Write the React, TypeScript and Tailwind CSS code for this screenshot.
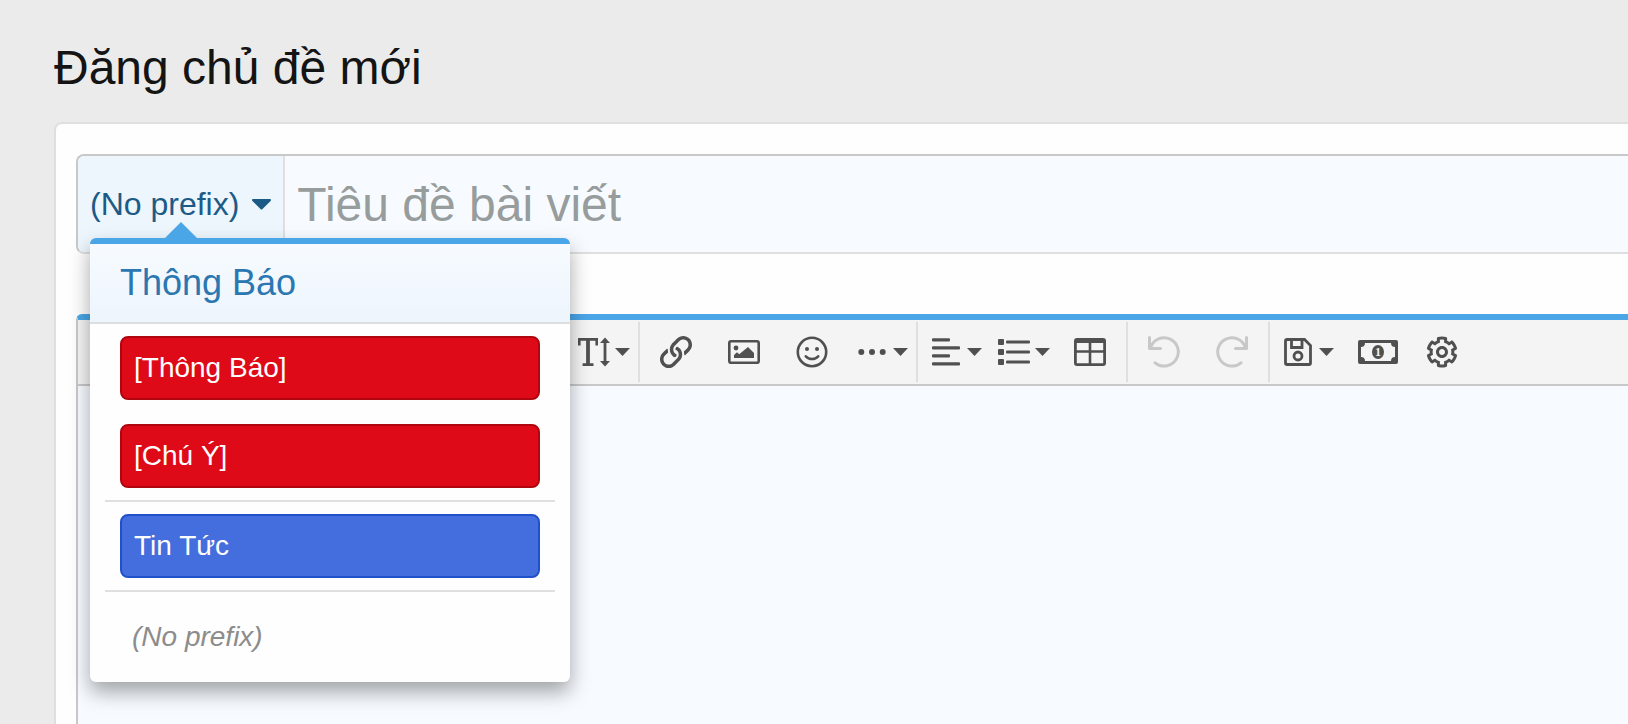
import React, { useState } from 'react';

interface IconProps {
  children: React.ReactNode;
  width?: number;
}

const Icon: React.FC<IconProps> = ({ children, width = 32 }) => (
  <svg width={width} height={32} viewBox={`0 0 ${width} 32`} fill="currentColor" className="shrink-0" aria-hidden="true">
    {children}
  </svg>
);

const Caret = () => (
  <svg width="15" height="8" viewBox="0 0 15 8" fill="currentColor" className="shrink-0" aria-hidden="true">
    <path d="M0 0h15L7.5 8z" />
  </svg>
);

const FontSizeIcon = () => (
  <Icon>
    <path d="M0 2h20v7.500h-2.600V4.800h-5.500v22.400H15.500V30H4.600v-2.800h3.500V4.800H2.600v4.700H0z" />
    <path d="M27 1.500l5 5.500h-3.600v18H32l-5 5.500-5-5.500h3.600V7H22z" />
  </Icon>
);

const LinkIcon = () => (
  <Icon>
    <path
      transform="scale(.0625)"
      d="M314.222 197.78c51.091 51.091 54.377 132.287 9.75 187.16-6.242 7.73-2.784 3.865-84.94 86.02-54.696 54.696-143.266 54.745-197.99 0-54.711-54.69-54.734-143.255 0-197.99 32.773-32.773 51.835-51.899 63.409-63.457 7.463-7.452 20.331-2.354 20.486 8.192a173.31 173.31 0 0 0 4.746 37.828c.966 4.029-.272 8.269-3.202 11.198L80.632 312.57c-32.755 32.775-32.887 85.892 0 118.8 32.775 32.755 85.892 32.887 118.8 0l75.19-75.2c32.718-32.725 32.777-86.013 0-118.79a83.722 83.722 0 0 0-22.814-16.229c-4.623-2.233-7.182-7.25-6.561-12.346 1.356-11.122 6.296-21.885 14.815-30.405l4.375-4.375c3.625-3.626 9.177-4.594 13.76-2.294 12.999 6.524 25.187 15.211 36.025 26.049zM470.958 41.04c-54.724-54.745-143.294-54.696-197.99 0-82.156 82.156-78.698 78.29-84.94 86.02-44.627 54.873-41.341 136.069 9.75 187.16 10.838 10.838 23.026 19.525 36.025 26.049 4.582 2.3 10.134 1.331 13.76-2.294l4.375-4.375c8.52-8.519 13.459-19.283 14.815-30.405.621-5.096-1.938-10.113-6.561-12.346a83.706 83.706 0 0 1-22.814-16.229c-32.777-32.777-32.718-86.065 0-118.79l75.19-75.2c32.908-32.887 86.025-32.755 118.8 0 32.887 32.908 32.755 86.025 0 118.8l-45.848 45.84c-2.93 2.929-4.168 7.169-3.202 11.198a173.31 173.31 0 0 1 4.746 37.828c.155 10.546 13.023 15.644 20.486 8.192 11.574-11.558 30.636-30.684 63.409-63.457 54.733-54.735 54.71-143.3-.001-197.991z"
    />
  </Icon>
);

const ImageIcon = () => (
  <Icon>
    <rect x="1.300" y="5.300" width="29.400" height="21.400" rx="1.800" fill="none" stroke="currentColor" strokeWidth="2.600" />
    <circle cx="8" cy="12" r="2.400" />
    <path d="M6 22v-3l3-2.800 2.200 2L20 11l6 6v5z" />
  </Icon>
);

const SmileIcon = () => (
  <Icon>
    <g fill="none" stroke="currentColor" strokeWidth="2.600" strokeLinecap="round">
      <circle cx="16" cy="16" r="14.200" />
      <path d="M9.800 20.300c3.200 3.600 9.200 3.600 12.400 0" />
    </g>
    <circle cx="11" cy="13" r="2" />
    <circle cx="21" cy="13" r="2" />
  </Icon>
);

const EllipsisIcon = () => (
  <Icon>
    <circle cx="5.300" cy="16" r="3" />
    <circle cx="16" cy="16" r="3" />
    <circle cx="26.700" cy="16" r="3" />
  </Icon>
);

const AlignIcon = () => (
  <Icon>
    <rect x="2" y="2.300" width="18" height="3.200" rx="1" />
    <rect x="2" y="10.300" width="28" height="3.200" rx="1" />
    <rect x="2" y="18.300" width="18" height="3.200" rx="1" />
    <rect x="2" y="26.300" width="28" height="3.200" rx="1" />
  </Icon>
);

const ListIcon = () => (
  <Icon>
    {[3, 13, 23].map((y) => (
      <g key={y}>
        <rect x="0" y={y} width="6" height="6" rx="1" />
        <rect x="8" y={y + 1.4} width="24" height="3.200" rx="1" />
      </g>
    ))}
  </Icon>
);

const TableIcon = () => (
  <Icon>
    <path fillRule="evenodd" d="M3 2h26a3 3 0 0 1 3 3v22a3 3 0 0 1-3 3H3a3 3 0 0 1-3-3V5a3 3 0 0 1 3-3zM2.800 7v7.200h11.900V7zM17.300 7v7.200h11.900V7zM2.800 16.800v10.400h11.900V16.800zM17.300 16.800v10.400h11.900V16.800z" />
  </Icon>
);

const UndoIcon = () => (
  <Icon>
    <g fill="none" stroke="currentColor" strokeWidth="3" strokeLinecap="round" strokeLinejoin="round">
      <path d="M1.500 1.500v11h11" />
      <path d="M2.600 11.500A14.200 14.200 0 1 1 7 26.800" />
    </g>
  </Icon>
);

const RedoIcon = () => (
  <Icon>
    <g fill="none" stroke="currentColor" strokeWidth="3" strokeLinecap="round" strokeLinejoin="round">
      <path d="M30.500 1.500v11h-11" />
      <path d="M29.400 11.500A14.200 14.200 0 1 0 25 26.800" />
    </g>
  </Icon>
);

const SaveIcon = () => (
  <Icon>
    <g fill="none" stroke="currentColor" strokeWidth="2.800">
      <path d="M5 3.500h17.500l6 6V27a1.500 1.500 0 0 1-1.500 1.500H5A1.500 1.500 0 0 1 3.500 27V5A1.500 1.500 0 0 1 5 3.500z" />
      <path d="M9.500 3.500v8h10.500v-8" />
      <circle cx="16" cy="20" r="4" />
    </g>
  </Icon>
);

const MoneyIcon = () => (
  <Icon width={40}>
    <path fillRule="evenodd" d="M2 4h36a2 2 0 0 1 2 2v20a2 2 0 0 1-2 2H2a2 2 0 0 1-2-2V6a2 2 0 0 1 2-2zM7 7a4 4 0 0 1-4 4v10a4 4 0 0 1 4 4h26a4 4 0 0 1 4-4V11a4 4 0 0 1-4-4z" />
    <ellipse cx="20" cy="16" rx="6" ry="7" />
    <text x="20" y="20" textAnchor="middle" fill="#f4f4f4" className="font-['Liberation_Serif',serif] text-[12px] font-bold">
      1
    </text>
  </Icon>
);

const GearIcon = () => (
  <Icon>
    <path
      transform="scale(.0625)"
      d="M452.515 237l31.843-18.382c9.426-5.441 13.996-16.542 11.177-27.054-11.404-42.531-33.842-80.547-64.058-110.797-7.68-7.688-19.575-9.246-28.985-3.811l-31.785 18.358a196.276 196.276 0 0 0-32.899-19.02V39.541a24.016 24.016 0 0 0-17.842-23.206c-41.761-11.107-86.117-11.121-127.93-.001-10.519 2.798-17.844 12.321-17.844 23.206v36.753a196.276 196.276 0 0 0-32.899 19.02l-31.785-18.358c-9.41-5.435-21.305-3.877-28.985 3.811-30.216 30.25-52.654 68.265-64.058 110.797-2.819 10.512 1.751 21.613 11.177 27.054L59.485 237a197.715 197.715 0 0 0 0 37.999l-31.843 18.382c-9.426 5.441-13.996 16.542-11.177 27.054 11.404 42.531 33.842 80.547 64.058 110.797 7.68 7.688 19.575 9.246 28.985 3.811l31.785-18.358a202.334 202.334 0 0 0 32.899 19.02v36.753a24.016 24.016 0 0 0 17.842 23.206c41.761 11.107 86.117 11.122 127.93.001 10.519-2.798 17.844-12.321 17.844-23.206v-36.753a196.276 196.276 0 0 0 32.899-19.02l31.785 18.358c9.41 5.435 21.305 3.877 28.985-3.811 30.216-30.25 52.654-68.266 64.058-110.797 2.819-10.512-1.751-21.613-11.177-27.054L452.515 275c1.22-12.65 1.22-25.35 0-38zm-52.679 63.019l43.819 25.289a200.138 200.138 0 0 1-33.849 58.528l-43.829-25.309c-31.984 27.397-36.659 30.077-76.168 44.029v50.599a200.917 200.917 0 0 1-67.618 0v-50.599c-39.504-13.95-44.196-16.642-76.168-44.029l-43.829 25.309a200.15 200.15 0 0 1-33.849-58.528l43.819-25.289c-7.63-41.299-7.634-46.719 0-88.038l-43.819-25.289c7.85-21.229 19.31-41.049 33.849-58.529l43.829 25.309c31.984-27.397 36.66-30.078 76.168-44.029V58.845a200.917 200.917 0 0 1 67.618 0v50.599c39.504 13.95 44.196 16.642 76.168 44.029l43.829-25.309a200.143 200.143 0 0 1 33.849 58.529l-43.819 25.289c7.631 41.3 7.634 46.718 0 88.037zM256 160c-52.935 0-96 43.065-96 96s43.065 96 96 96 96-43.065 96-96-43.065-96-96-96zm0 144c-26.468 0-48-21.532-48-48 0-26.467 21.532-48 48-48s48 21.533 48 48c0 26.468-21.532 48-48 48z"
    />
  </Icon>
);

interface ToolButtonProps {
  icon: React.ReactNode;
  label: string;
  menu?: boolean;
  disabled?: boolean;
  size?: string;
}

const ToolButton: React.FC<ToolButtonProps> = ({ icon, label, menu, disabled, size = 'w-[68px]' }) => (
  <button
    type="button"
    aria-label={label}
    disabled={disabled}
    className={`flex h-16 shrink-0 items-center ${size} ${menu ? 'gap-[5px] pl-[10px]' : 'justify-center'} ${
      disabled ? 'text-[#c8c8c8]' : 'text-[#505050]'
    }`}
  >
    {icon}
    {menu && <Caret />}
  </button>
);

const Separator = () => <div className="mx-0.5 my-0.5 w-0.5 shrink-0 bg-[#dfdfdf]" />;

const Toolbar = () => (
  <div className="flex h-[66px] overflow-hidden border-b-2 border-[#c8c8c8] bg-[#f4f4f4] pl-[490px]">
    <ToolButton icon={<FontSizeIcon />} label="Cỡ chữ" menu />
    <Separator />
    <ToolButton icon={<LinkIcon />} label="Chèn liên kết" />
    <ToolButton icon={<ImageIcon />} label="Chèn ảnh" />
    <ToolButton icon={<SmileIcon />} label="Mặt cười" />
    <ToolButton icon={<EllipsisIcon />} label="Chèn" menu />
    <Separator />
    <ToolButton icon={<AlignIcon />} label="Căn lề" menu />
    <ToolButton icon={<ListIcon />} label="Danh sách" menu />
    <ToolButton icon={<TableIcon />} label="Chèn bảng" />
    <Separator />
    <ToolButton icon={<UndoIcon />} label="Hoàn tác" disabled />
    <ToolButton icon={<RedoIcon />} label="Làm lại" disabled />
    <Separator />
    <ToolButton icon={<SaveIcon />} label="Bản nháp" menu />
    <ToolButton icon={<MoneyIcon />} label="Tiền" size="w-[76px]" />
    <ToolButton icon={<GearIcon />} label="Chuyển BB code" size="w-[52px]" />
  </div>
);

interface PrefixGroup {
  id: string;
  items: { name: string; style: string }[];
}

const prefixGroups: PrefixGroup[] = [
  {
    id: 'notice',
    items: [
      { name: '[Thông Báo]', style: 'border-[#b0060f] bg-[#df0a17] text-[#fefefe]' },
      { name: '[Chú Ý]', style: 'border-[#b0060f] bg-[#df0a17] text-[#fefefe]' },
    ],
  },
  {
    id: 'news',
    items: [{ name: 'Tin Tức', style: 'border-[#2150cb] bg-[#446edd] text-[#fefefe]' }],
  },
];

interface PrefixMenuProps {
  onSelect: (name: string) => void;
}

const PrefixMenu: React.FC<PrefixMenuProps> = ({ onSelect }) => (
  <div className="absolute top-[82px] left-3 z-10 w-[480px] rounded-md border-t-[6px] border-[#4ba6e8] bg-[#fefefe] shadow-[0_10px_20px_rgba(0,0,0,0.35)]">
    <svg width="32" height="16" viewBox="0 0 32 16" className="absolute -top-[22px] left-[75px]" aria-hidden="true">
      <path d="M16 0l16 16H0z" fill="#4ba6e8" />
    </svg>
    <h2 className="border-b-2 border-[#dfdfdf] bg-gradient-to-b from-[#f7fbff] to-[#edf5fd] px-[30px] text-[36px] leading-[78px] text-[#2a77b2]">
      Thông Báo
    </h2>
    <div className="px-[15px]">
      {prefixGroups.map((group) => (
        <div key={group.id} className="flex flex-col gap-6 border-b-2 border-[#dfdfdf] px-[15px] py-3">
          {group.items.map((item) => (
            <button
              key={item.name}
              type="button"
              onClick={() => onSelect(item.name)}
              className={`h-16 rounded-lg border-2 px-3 text-left text-[28px] ${item.style}`}
            >
              {item.name}
            </button>
          ))}
        </div>
      ))}
      <button
        type="button"
        onClick={() => onSelect('(No prefix)')}
        className="h-[90px] w-full px-[27px] text-left text-[28px] text-[#8c8c8c] italic"
      >
        (No prefix)
      </button>
    </div>
  </div>
);

const App: React.FC = () => {
  const [prefix, setPrefix] = useState('(No prefix)');
  const [open, setOpen] = useState(true);

  const handleSelect = (name: string) => {
    setPrefix(name);
    setOpen(false);
  };

  return (
    <div className="flex min-h-screen flex-col bg-[#ebebeb] pt-9 pl-[54px] font-['Liberation_Sans',Arial,sans-serif]">
      <h1 className="mb-[22px] text-[48px] leading-[64px] text-[#141414]">Đăng chủ đề mới</h1>

      <main className="flex flex-1 flex-col rounded-tl-lg border-t-2 border-l-2 border-[#dfdfdf] bg-[#fefefe] pt-[30px] pl-5">
        {/* Prefix and title */}
        <div className="relative flex h-[100px] rounded-l-lg border-2 border-r-0 border-[#c8c8c8] border-b-[#dfdfdf] bg-[#f7fbff]">
          <button
            type="button"
            aria-expanded={open}
            onClick={() => setOpen(!open)}
            className="flex shrink-0 items-center gap-[13px] rounded-l-md border-r-2 border-[#dfdfdf] bg-[#edf5fd] px-3 text-[32px] text-[#1d5b87]"
          >
            {prefix}
            <svg width="19" height="11" viewBox="0 0 19 11" fill="currentColor" aria-hidden="true">
              <path d="M1.200 0h16.600c1.100 0 1.600 1.200.8 2l-8.100 8.100a1.400 1.400 0 0 1-2 0L.4 2C-.4 1.200.1 0 1.200 0z" />
            </svg>
          </button>
          <input
            type="text"
            aria-label="Tiêu đề bài viết"
            placeholder="Tiêu đề bài viết"
            className="min-w-0 flex-1 bg-transparent px-3 pt-0.5 text-[48px] text-[#141414] outline-none placeholder:text-[#979c9c]"
          />
          {open && <PrefixMenu onSelect={handleSelect} />}
        </div>

        {/* Editor */}
        <div className="mt-[60px] flex flex-1 flex-col overflow-hidden rounded-tl-md border-t-[6px] border-l-2 border-t-[#4ba6e8] border-l-[#c8c8c8] bg-[#f7fbff]">
          <Toolbar />
          <textarea
            aria-label="Nội dung"
            className="w-full flex-1 resize-none bg-transparent p-3 text-[32px] text-[#141414] outline-none"
          />
        </div>
      </main>
    </div>
  );
};

export default App;
